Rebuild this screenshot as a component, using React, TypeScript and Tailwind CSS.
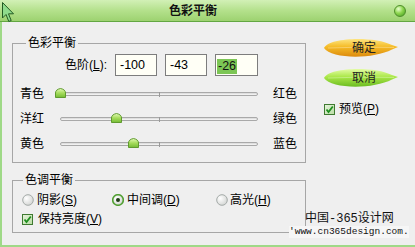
import React from "react";

const FONT = "font-['Liberation_Sans','Noto_Sans_CJK_SC',sans-serif]";

const SLIDERS = [
  { left: "青色", right: "红色", value: -100 },
  { left: "洋红", right: "绿色", value: -43 },
  { left: "黄色", right: "蓝色", value: -26 },
];

function Thumb() {
  return (
    <svg width="11" height="10" viewBox="0 0 11 10">
      <defs>
        <linearGradient id="thumbG" x1="0" y1="0" x2="0" y2="1">
          <stop offset="0" stopColor="#e4fbb8" />
          <stop offset="0.5" stopColor="#a6dc5c" />
          <stop offset="1" stopColor="#74bb34" />
        </linearGradient>
      </defs>
      <path
        d="M0.5 9.5 V5 Q0.5 1.5 5.5 0.5 Q10.5 1.5 10.5 5 V9.5 Z"
        fill="url(#thumbG)"
        stroke="#5f9a2e"
      />
    </svg>
  );
}

function Slider({ value }: { value: number }) {
  const pct = (value + 100) / 200;
  return (
    <div className="relative w-[198px] h-[12px] flex items-center">
      <div className="w-full h-[4px] rounded-full border border-[#a9a9a9] bg-gradient-to-b from-[#d6d6d6] to-[#fafafa]" />
      <div className="absolute left-[99px] top-[4px] w-[1px] h-[5px] bg-[#9a9a9a]" />
      <div
        className="absolute top-[0px] -ml-[5px]"
        style={{ left: `${pct * 198}px` }}
      >
        <Thumb />
      </div>
    </div>
  );
}

function Radio({ checked }: { checked?: boolean }) {
  return (
    <svg width="12" height="12" viewBox="0 0 12 12">
      <defs>
        <radialGradient id="radG" cx="0.35" cy="0.35" r="0.7">
          <stop offset="0" stopColor="#ffffff" />
          <stop offset="1" stopColor="#d4d6d4" />
        </radialGradient>
      </defs>
      <circle
        cx="6"
        cy="6"
        r="5.3"
        fill="url(#radG)"
        stroke={checked ? "#52a033" : "#a4aaa8"}
        strokeWidth={checked ? 1.6 : 1}
      />
      {checked && <circle cx="6" cy="6" r="2" fill="#1f3d16" />}
    </svg>
  );
}

function Check() {
  return (
    <svg width="11" height="11" viewBox="0 0 11 11">
      <defs>
        <linearGradient id="chkG" x1="0" y1="0" x2="1" y2="1">
          <stop offset="0" stopColor="#e6f3dc" />
          <stop offset="1" stopColor="#b9dca4" />
        </linearGradient>
      </defs>
      <rect x="0.5" y="0.5" width="10" height="10" fill="url(#chkG)" stroke="#3f7a31" />
      <path d="M2.5 5.5 L4.5 8 L8.8 2.5" fill="none" stroke="#1f8f1f" strokeWidth="1.8" />
    </svg>
  );
}

function Leaf({ label, tone }: { label: string; tone: "orange" | "green" }) {
  const id = `leaf-${tone}`;
  const stops =
    tone === "orange"
      ? ["#fde581", "#f5bb26", "#dc8a0e"]
      : ["#e4fca6", "#aae748", "#6cbc22"];
  return (
    <button type="button" className="relative w-[76px] h-[21px] flex items-center justify-center">
      <svg className="absolute inset-0" width="76" height="21" viewBox="0 0 76 21">
        <defs>
          <linearGradient id={id} x1="0" y1="0" x2="0" y2="1">
            <stop offset="0" stopColor={stops[0]} />
            <stop offset="0.45" stopColor={stops[1]} />
            <stop offset="1" stopColor={stops[2]} />
          </linearGradient>
        </defs>
        <path
          d="M1 11 C 6 0, 52 -1, 69 8 L 75 10 L 69 12.5 C 50 22.5, 8 22, 1 11 Z"
          fill={`url(#${id})`}
        />
        <path d="M5 11 Q 38 9.5 71 10.5" fill="none" stroke="#ffffff" strokeOpacity="0.3" />
      </svg>
      <span className="relative pl-[6px] leading-[14px] text-[#222]">{label}</span>
    </button>
  );
}

export default function App() {
  return (
    <div className={`relative w-[415px] h-[247px] overflow-hidden bg-[#efefef] text-[12px] text-black ${FONT}`}>
      {/* title bar */}
      <div className="h-[22px] flex items-center bg-gradient-to-b from-[#d2f0b6] via-[#b4e18c] to-[#9dd270] border-b border-[#63a742]">
        <div className="flex-1 text-center pr-[8px] font-bold text-[12px] leading-[14px] text-[#111]">
          色彩平衡
        </div>
        <div className="w-[12px] h-[12px] mr-[9px] rounded-full border border-[#4f8f2a] bg-[radial-gradient(circle_at_35%_30%,#e8ffd0_0%,#8ed650_45%,#3f9a1c_100%)]" />
      </div>

      {/* mouse cursor */}
      <svg className="absolute left-[2px] top-[2px]" width="12" height="21" viewBox="0 0 12 21">
        <path
          d="M0.5 0.5 L0.5 16 L4 12.5 L6.8 19.5 L9.2 18.5 L6.5 11.8 L11.5 11.8 Z"
          fill="#8fdc8c"
          stroke="#245c24"
        />
      </svg>

      {/* body */}
      <div className="flex h-[225px] border-l-2 border-b-2 border-[#9fd987]">
        <div className="w-[304px] pl-[10px]">
          <fieldset className="mt-[14px] h-[127px] border border-[#a6a6a6]">
            <legend className="ml-[13px] px-[2px] leading-[14px]">色彩平衡</legend>
            <div className="mt-[4px] flex h-[22px] items-center">
              <div className="w-[102px] pr-[8px] text-right leading-[14px]">
                色阶(<span className="underline">L</span>):
              </div>
              <div className="flex gap-[8px]">
                <div className="w-[42px] h-[22px] border border-[#7d7d7d] bg-[#fffff6] pl-[4px] leading-[20px] text-[12.5px]">-100</div>
                <div className="w-[42px] h-[22px] border border-[#7d7d7d] bg-[#fffff6] pl-[4px] leading-[20px] text-[12.5px]">-43</div>
                <div className="w-[43px] h-[22px] border border-[#7d7d7d] bg-[#fffff6] pl-[1px] pt-[2px]">
                  <span className="inline-block bg-[#7cc655] leading-[15px] text-[12.5px] px-[1px] text-[#111]">-26</span>
                </div>
              </div>
            </div>
            <div className="mt-[5px]">
              {SLIDERS.map((s) => (
                <div key={s.left} className="flex h-[25px] items-center pl-[7px]">
                  <div className="w-[24px] leading-[14px]">{s.left}</div>
                  <div className="ml-[16px]">
                    <Slider value={s.value} />
                  </div>
                  <div className="ml-[15px] leading-[14px]">{s.right}</div>
                </div>
              ))}
            </div>
          </fieldset>

          <fieldset className="mt-[10px] h-[60px] border border-[#a6a6a6]">
            <legend className="ml-[10px] px-[2px] leading-[14px]">色调平衡</legend>
            <div className="mt-[5px] flex h-[16px] items-center pl-[9px]">
              <div className="w-[90px] flex items-center gap-[3px]">
                <Radio />
                <span className="leading-[14px]">阴影(<span className="underline">S</span>)</span>
              </div>
              <div className="w-[104px] flex items-center gap-[3px]">
                <Radio checked />
                <span className="leading-[14px]">中间调(<span className="underline">D</span>)</span>
              </div>
              <div className="flex items-center gap-[2px]">
                <Radio />
                <span className="leading-[14px]">高光(<span className="underline">H</span>)</span>
              </div>
            </div>
            <div className="mt-[3px] flex h-[16px] items-center pl-[9px] gap-[5px]">
              <Check />
              <span className="leading-[14px]">保持亮度(<span className="underline">V</span>)</span>
            </div>
          </fieldset>
        </div>

        <div className="flex flex-col pl-[17px]">
          <div className="mt-[15px]">
            <Leaf label="确定" tone="orange" />
          </div>
          <div className="mt-[9px]">
            <Leaf label="取消" tone="green" />
          </div>
          <div className="mt-[14px] flex h-[14px] items-center gap-[4px] pl-[1px]">
            <Check />
            <span className="leading-[14px]">预览(<span className="underline">P</span>)</span>
          </div>
        </div>
      </div>

      {/* watermark */}
      <div className="absolute left-[289px] top-[212px] flex flex-col items-start font-['Liberation_Mono','Noto_Sans_CJK_SC',monospace] text-[#111]">
        <div className="pl-[16px] text-[12px] leading-[14px]">中国-365设计网</div>
        <div className="text-[9.5px] leading-[12px] bg-[#f6f6f6]">'www.cn365design.com.</div>
      </div>
    </div>
  );
}
